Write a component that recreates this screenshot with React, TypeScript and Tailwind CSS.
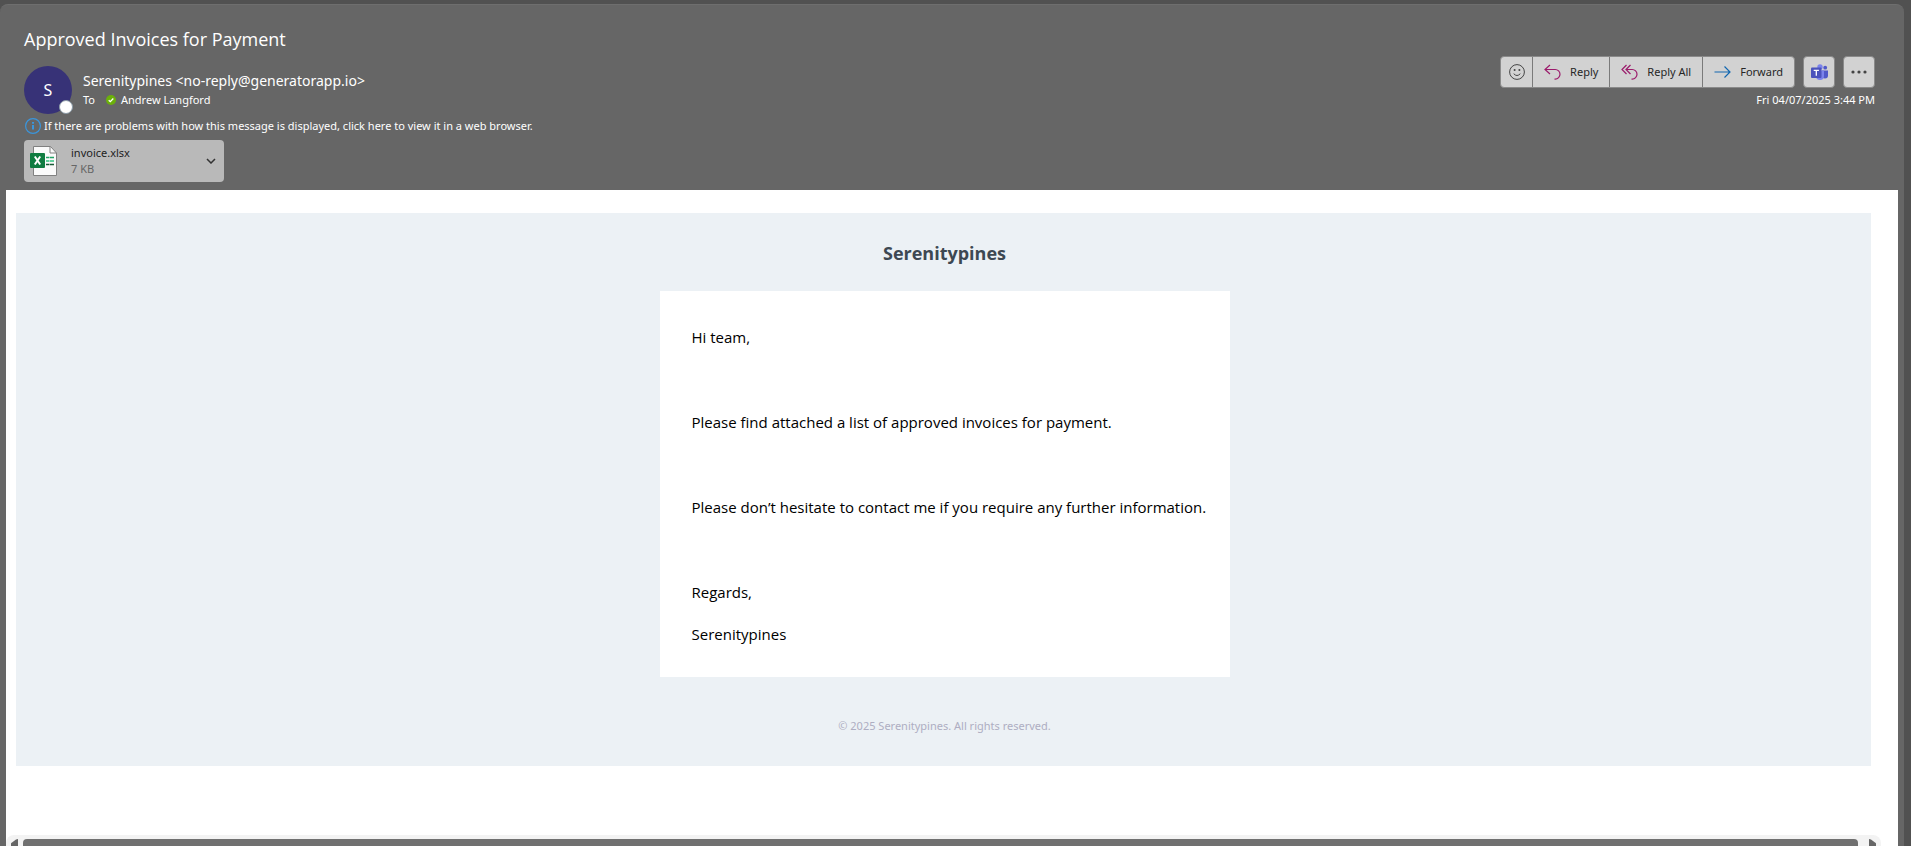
import type { ReactNode } from "react"

const paragraphs = [
  "Hi team,",
  "Please find attached a list of approved invoices for payment.",
  "Please don’t hesitate to contact me if you require any further information.",
]

export default function App() {
  return (
    <div className="flex min-h-screen flex-col bg-[#515151] pt-1 pr-[7px] font-['Open_Sans','Noto_Sans',sans-serif]">
      <main className="flex flex-1 flex-col rounded-t-lg border-t border-[#6e6e6e] bg-[#666666] px-[6px]">
        <MessageHeader />
        <MessageBody />
      </main>
    </div>
  )
}

function MessageHeader() {
  return (
    <header className="flex flex-col pt-[22px] pr-[23px] pb-2 pl-[18px] font-['Noto_Sans','Open_Sans',sans-serif] text-white">
      <h1 className="font-['Open_Sans','Noto_Sans',sans-serif] text-lg leading-6">
        Approved Invoices for Payment
      </h1>
      <div className="mt-[5px] flex items-start justify-between">
        <div className="flex pt-[10px]">
          <div className="relative flex size-12 items-center justify-center rounded-full bg-[#373277] text-base">
            S
            <span className="absolute -right-px bottom-0 size-[14px] rounded-full border border-[#8a9aa6] bg-white" />
          </div>
          <div className="ml-[11px] flex flex-col pt-1">
            <span className="text-sm leading-[22px]">
              Serenitypines &lt;no-reply@generatorapp.io&gt;
            </span>
            <span className="flex items-center text-[11px] leading-4">
              To
              <StatusIcon />
              Andrew Langford
            </span>
          </div>
        </div>
        <MessageActions />
      </div>

      <button
        type="button"
        className="mt-1 flex items-center gap-[3px] self-start text-[11px] leading-4"
      >
        <InfoIcon />
        If there are problems with how this message is displayed, click here to view it in a web browser.
      </button>

      <button
        type="button"
        className="mt-[6px] flex h-[42px] w-[200px] items-center rounded bg-[#b9b9b9] pr-2 pl-[6px] text-left text-[11px]"
      >
        <ExcelIcon />
        <span className="ml-[14px] flex flex-1 flex-col leading-4">
          <span className="text-[#222222]">invoice.xlsx</span>
          <span className="text-[#666666]">7 KB</span>
        </span>
        <svg viewBox="0 0 10 6" className="w-[10px]" fill="none" stroke="#333333" strokeWidth="1.5">
          <path d="M1 1l4 4 4-4" />
        </svg>
      </button>
    </header>
  )
}

function MessageActions() {
  return (
    <div className="flex flex-col items-end text-[11px]">
      <div className="flex gap-2 text-[#262626]">
        <div className="flex h-8 divide-x divide-[#7a7a7a] rounded border border-[#8a8a8a] bg-[#d2d2d2]">
          <button type="button" aria-label="React" className="flex w-8 items-center justify-center">
            <SmileIcon />
          </button>
          <ActionButton icon={<ReplyIcon />} label="Reply" />
          <ActionButton icon={<ReplyAllIcon />} label="Reply All" />
          <ActionButton icon={<ForwardIcon />} label="Forward" />
        </div>
        <button
          type="button"
          aria-label="Share to Teams"
          className="flex size-8 items-center justify-center rounded border border-[#8a8a8a] bg-[#d2d2d2]"
        >
          <TeamsIcon />
        </button>
        <button
          type="button"
          aria-label="More actions"
          className="flex size-8 items-center justify-center rounded border border-[#8a8a8a] bg-[#d2d2d2]"
        >
          <svg viewBox="0 0 16 4" className="w-4" fill="#444444">
            <circle cx="2" cy="2" r="1.6" />
            <circle cx="8" cy="2" r="1.6" />
            <circle cx="14" cy="2" r="1.6" />
          </svg>
        </button>
      </div>
      <time className="mt-1 leading-4">Fri 04/07/2025 3:44 PM</time>
    </div>
  )
}

function ActionButton({ icon, label }: { icon: ReactNode; label: string }) {
  return (
    <button type="button" className="flex items-center gap-[9px] px-[11px]">
      {icon}
      {label}
    </button>
  )
}

function MessageBody() {
  return (
    <section className="flex flex-1 flex-col bg-white pt-[23px] text-black">
      <div className="mr-[27px] ml-[10px] flex flex-col items-center bg-[#ecf1f5] pt-7 pb-7 pl-0.5">
        <h2 className="text-lg leading-6 font-bold text-[#3d4852]">Serenitypines</h2>
        <div className="mt-[26px] w-full max-w-[570px] bg-white px-8 pt-[34px] pb-[31px] text-[15px] leading-6">
          <div className="flex flex-col gap-[61px]">
            {paragraphs.map((text) => (
              <p key={text} className="md:whitespace-nowrap">
                {text}
              </p>
            ))}
            <div className="flex flex-col gap-[18px]">
              <p>Regards,</p>
              <p>Serenitypines</p>
            </div>
          </div>
        </div>
        <p className="mt-[37px] font-['Noto_Sans','Open_Sans',sans-serif] text-[11px] leading-6 text-[#aeaec2]">
          © 2025 Serenitypines. All rights reserved.
        </p>
      </div>
      <Scrollbar />
    </section>
  )
}

/* bottom edge of the window cuts the scrollbar off */
function Scrollbar() {
  return (
    <div className="mt-auto mr-[17px] flex h-[11px] items-end rounded-t-lg bg-[#f3f3f3] px-[5px]">
      <svg viewBox="0 0 7 7" className="h-[7px] w-[7px]" fill="#666666">
        <path d="M7 0v7H0V4.500Q0 4 1 3.500L5 .5Q6 0 7 0z" />
      </svg>
      <div className="mr-[11px] ml-[5px] h-[7px] flex-1 rounded-t bg-[#707070]" />
      <svg viewBox="0 0 7 7" className="h-[7px] w-[7px]" fill="#666666">
        <path d="M0 0v7H7V4.500Q7 4 6 3.500L2 .5Q1 0 0 0z" />
      </svg>
    </div>
  )
}

function StatusIcon() {
  return (
    <svg viewBox="0 0 10 10" className="mr-[5px] ml-[11px] size-[10px]">
      <circle cx="5" cy="5" r="5" fill="#6bb00a" />
      <path d="M2.700 5.200l1.600 1.500 3-3.200" fill="none" stroke="#ffffff" strokeWidth="1.300" />
    </svg>
  )
}

function InfoIcon() {
  return (
    <svg viewBox="0 0 16 16" className="ml-px size-4" fill="none" stroke="#3a96dd">
      <circle cx="8" cy="8" r="7.400" strokeWidth="1.200" />
      <path d="M8 7v4.500M8 4v1.700" strokeWidth="2" />
    </svg>
  )
}

function ExcelIcon() {
  return (
    <svg viewBox="0 0 27 30" className="h-[30px] w-[27px]">
      <path d="M3.500.5h17l6 6.500v22.500h-23z" fill="#fafafa" stroke="#808080" />
      <path d="M20 .5v6.500h6.500" fill="none" stroke="#808080" />
      <path d="M16 11.500h3.500M20 11.500h4" stroke="#21a366" strokeWidth="1.600" />
      <path d="M16 15h3.500M20 15h4" stroke="#33c481" strokeWidth="1.600" />
      <path d="M16 18.500h3.500M20 18.500h4" stroke="#185c37" strokeWidth="1.600" />
      <rect y="7" width="15" height="15" rx="1" fill="#107c41" />
      <path d="M4.800 10.500l5.400 8M10.200 10.500l-5.400 8" stroke="#ffffff" strokeWidth="2" />
    </svg>
  )
}

function SmileIcon() {
  return (
    <svg viewBox="0 0 16 16" className="size-4" fill="none" stroke="#444444">
      <circle cx="8" cy="8" r="7.400" />
      <path d="M4.700 9.700q3.300 3.600 6.600 0" />
      <circle cx="5.600" cy="6" r="1" fill="#444444" stroke="none" />
      <circle cx="10.400" cy="6" r="1" fill="#444444" stroke="none" />
    </svg>
  )
}

function ReplyIcon() {
  return (
    <svg viewBox="0 0 17 16" className="h-4 w-[17px]" fill="none" stroke="#9b1b6b" strokeWidth="1.200">
      <path d="M6 1L1 5.500 6 10M1 5.500h10.200a4.800 4.800 0 0 1 0 9.600H10.500" />
    </svg>
  )
}

function ReplyAllIcon() {
  return (
    <svg viewBox="0 0 17 16" className="h-4 w-[17px]" fill="none" stroke="#9b1b6b" strokeWidth="1.200">
      <path d="M5.500 1L1 5.500 5.500 10M9.500 1L5 5.500 9.500 10M5 5.500h6.200a4.800 4.800 0 0 1 0 9.600H10.500" />
    </svg>
  )
}

function ForwardIcon() {
  return (
    <svg viewBox="0 0 17 16" className="h-4 w-[17px]" fill="none" stroke="#1267b0" strokeWidth="1.200">
      <path d="M.5 8h15M10.500 2.500L16 8l-5.500 5.500" />
    </svg>
  )
}

function TeamsIcon() {
  return (
    <svg viewBox="0 0 17 17" className="size-[17px]">
      <circle cx="14.200" cy="3.700" r="1.900" fill="#5059c9" />
      <path d="M11 6.500h6v5a3 3 0 0 1-6 0z" fill="#5059c9" />
      <circle cx="9" cy="3" r="2.700" fill="#7b83eb" />
      <path d="M5 6.500h8v5.500a4 4 0 0 1-8 0z" fill="#7b83eb" />
      <rect y="3.500" width="10.500" height="10.500" rx="1" fill="#4b53bc" />
      <path d="M2.700 6.300h5.200M5.300 6.300v5.400" fill="none" stroke="#ffffff" strokeWidth="1.300" />
    </svg>
  )
}
